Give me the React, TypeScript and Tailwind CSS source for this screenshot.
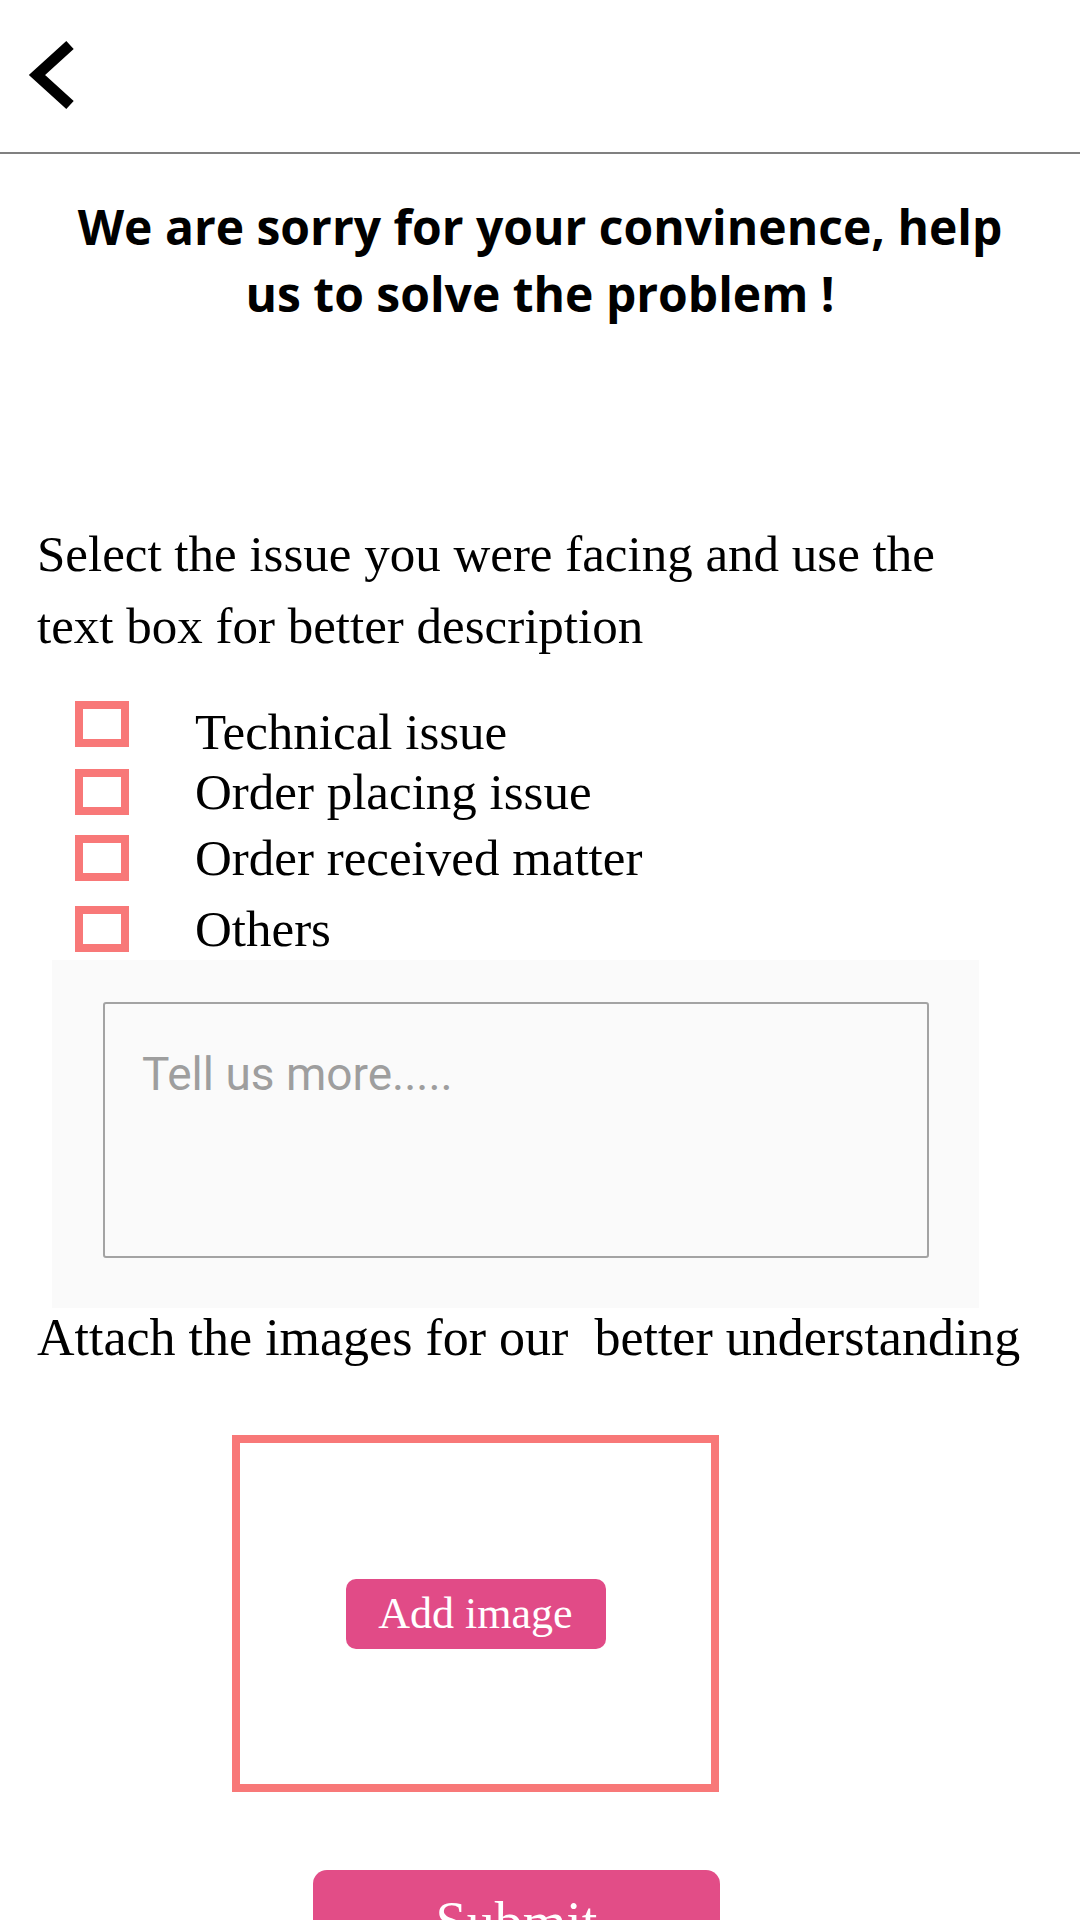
import { useState } from "react";

const serif = "font-['Liberation_Serif',serif]";

const issues = [
  { label: "Technical issue", row: "", text: "mt-[8px]" },
  { label: "Order placing issue", row: "mt-[14px]", text: "" },
  { label: "Order received matter", row: "mt-[20px]", text: "" },
  { label: "Others", row: "mt-[25px]", text: "" },
];

function IssueRow({ label, row, text, checked, onToggle }: {
  label: string;
  row: string;
  text: string;
  checked: boolean;
  onToggle: () => void;
}) {
  return (
    <div className={`flex items-start pl-[75px] ${row}`} onClick={onToggle}>
      <div className="w-[54px] h-[46px] border-[8px] border-[#f87878] bg-white shrink-0 flex items-center justify-center">
        {checked && <div className="w-[22px] h-[16px] bg-[#f87878]" />}
      </div>
      <span className={`ml-[66px] text-[51px] leading-[46px] text-black ${text}`}>
        {label}
      </span>
    </div>
  );
}

export default function App() {
  const [selected, setSelected] = useState<string[]>([]);

  function toggle(label: string) {
    setSelected((prev) =>
      prev.includes(label) ? prev.filter((l) => l !== label) : [...prev, label]
    );
  }

  return (
    <div className={`w-[1080px] min-h-[1920px] bg-white ${serif}`}>
      {/* top bar */}
      <div className="h-[154px] border-b-2 border-[#808080]">
        <svg
          className="ml-[25px] pt-[40px] box-content"
          width="50"
          height="70"
          viewBox="0 0 50 70"
          fill="none"
        >
          <polyline
            points="45,5 12,35 45,65"
            stroke="#000"
            strokeWidth="11"
            strokeLinejoin="miter"
            strokeLinecap="butt"
          />
        </svg>
      </div>

      <h1 className="mt-[39px] text-center font-['Open_Sans',sans-serif] font-bold text-[48px] leading-[67px] text-black">
        We are sorry for your convinence, help
        <br />
        us to solve the problem !
      </h1>

      <p className="mt-[191px] pl-[37px] text-[51px] leading-[72px] text-black">
        Select the issue you were facing and use the
        <br />
        text box for better description
      </p>

      <div className="mt-[39px]">
        {issues.map((item) => (
          <IssueRow
            key={item.label}
            label={item.label}
            row={item.row}
            text={item.text}
            checked={selected.includes(item.label)}
            onToggle={() => toggle(item.label)}
          />
        ))}
      </div>

      <div className="mt-[8px] ml-[52px] w-[927px] h-[348px] bg-[#fafafa] pt-[42px] pl-[51px]">
        <textarea
          className="block w-[826px] h-[256px] resize-none bg-[#fafafa] border-2 border-[#a3a3a3] rounded-[3px] pt-[43px] pl-[37px] font-['Roboto',sans-serif] text-[46px] leading-[54px] text-[#555] placeholder:text-[#9e9e9e] outline-none"
          placeholder="Tell us more....."
        />
      </div>

      <p className="pl-[37px] text-[52px] leading-[60px] text-black whitespace-pre">
        {"Attach the images for our  better understanding"}
      </p>

      <div className="mt-[67px] ml-[232px] w-[487px] h-[357px] border-[8px] border-[#f87878] flex items-center justify-center">
        <button className="w-[260px] h-[70px] rounded-[10px] bg-[#e14b87] text-white text-[44px] leading-[70px]">
          Add image
        </button>
      </div>

      <button className="block mt-[78px] ml-[313px] w-[407px] rounded-[14px] bg-[#e24d87] text-white text-[56px] leading-[70px] pt-[17px] pb-[24px] text-center">
        Submit
      </button>
    </div>
  );
}
